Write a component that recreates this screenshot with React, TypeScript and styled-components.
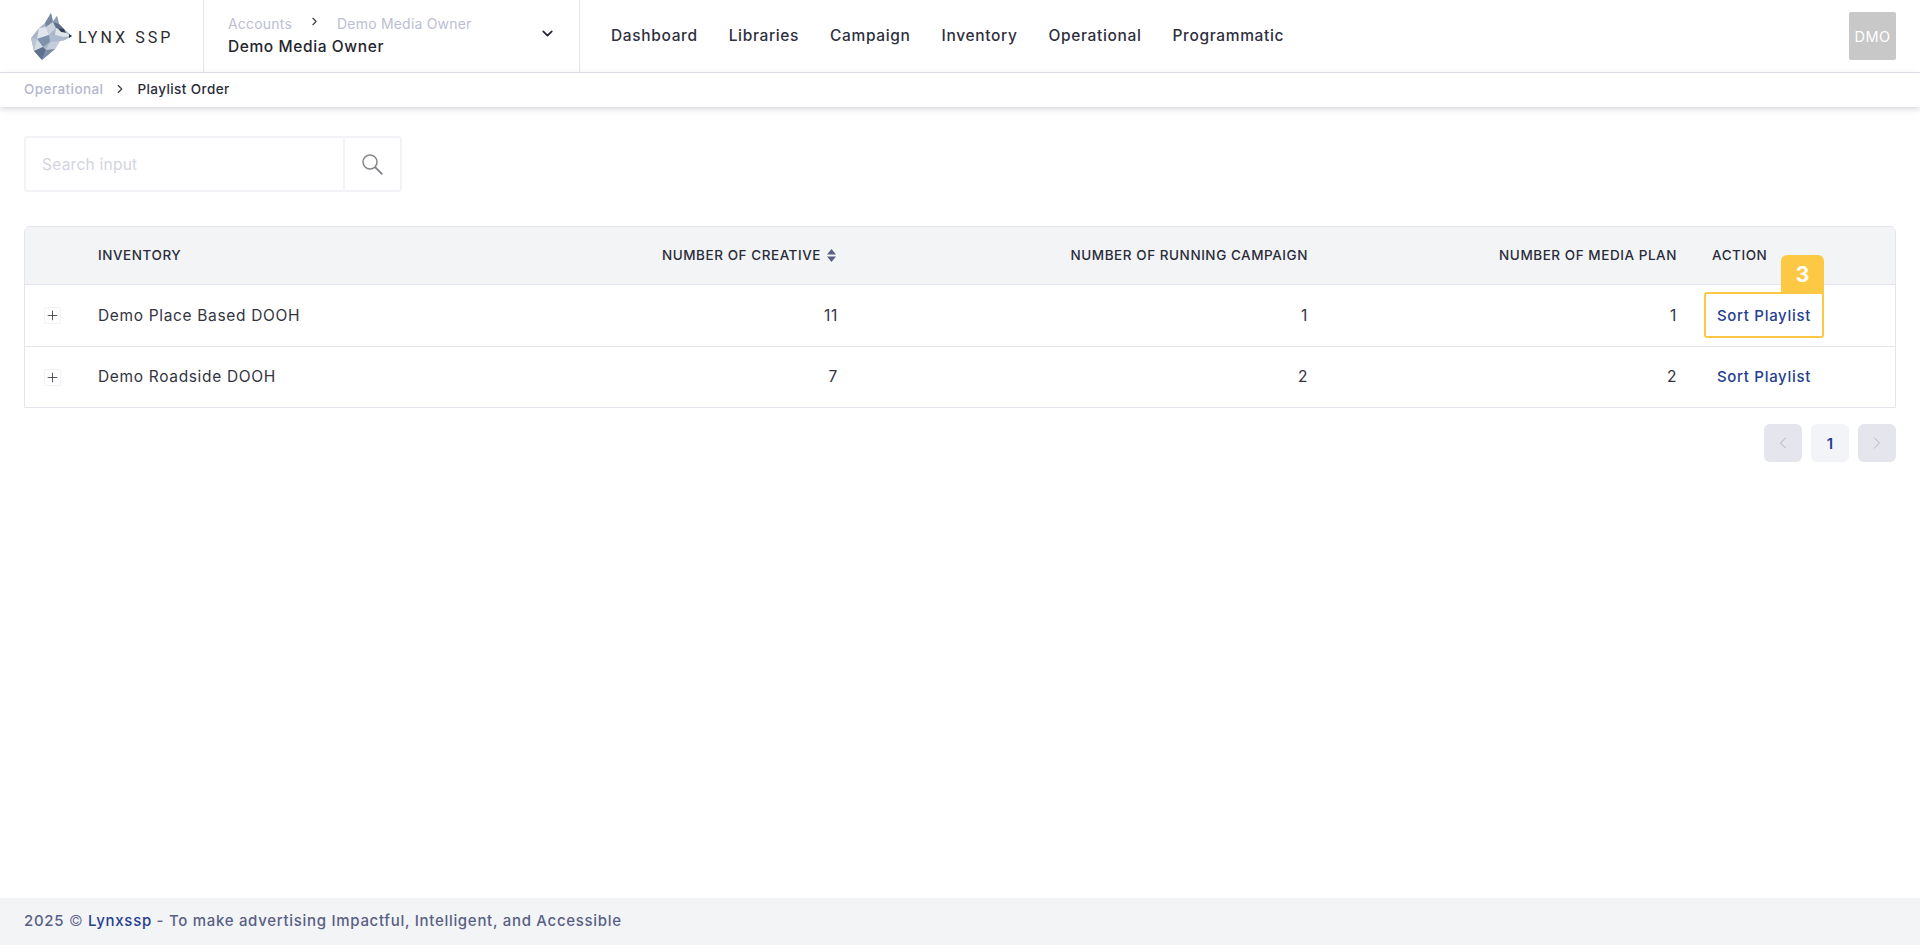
import React from "react";
import styled, { createGlobalStyle } from "styled-components";
import { ChevronDown, ChevronLeft, ChevronRight, Plus } from "lucide-react";

const GlobalStyle = createGlobalStyle`
  html, body {
    margin: 0;
    padding: 0;
    background: #fff;
    font-family: Inter, "Liberation Sans", sans-serif;
    color: #2a2c3a;
  }
  * {
    box-sizing: border-box;
  }
`;

const Page = styled.div`
  display: flex;
  flex-direction: column;
  height: 948px;
  padding-bottom: 3px;
  overflow: hidden;
`;

const TopBar = styled.header`
  display: flex;
  align-items: stretch;
  height: 73px;
  border-bottom: 1px solid #e4e5ed;
`;

const LogoCell = styled.div`
  display: flex;
  align-items: center;
  gap: 6px;
  width: 204px;
  padding: 1px 0 0 31px;
  border-right: 1px solid #e4e5ed;
`;

const LogoText = styled.span`
  font-family: Roboto, sans-serif;
  font-size: 16px;
  letter-spacing: 3.05px;
  color: #2c2c33;
  white-space: nowrap;
  margin-top: 2px;
`;

const AccountCell = styled.div`
  display: flex;
  align-items: center;
  justify-content: space-between;
  width: 376px;
  padding: 0 24px;
  border-right: 1px solid #e4e5ed;
`;

const AccountTexts = styled.div`
  display: flex;
  flex-direction: column;
  gap: 5px;
  margin-top: -2px;
`;

const AccountTrail = styled.div`
  display: flex;
  align-items: center;
  gap: 16px;
  font-size: 14px;
  letter-spacing: 0.2px;
  color: #bcbed3;
`;

const TrailArrow = styled.span`
  display: flex;
  color: #3a3c4a;
  margin-top: -3px;
`;

const AccountName = styled.div`
  font-size: 15.5px;
  font-weight: 500;
  letter-spacing: 0.6px;
  color: #24252e;
`;

const CaretButton = styled.span`
  display: flex;
  color: #24252e;
  margin: -5px -1px 0 0;
`;

const Nav = styled.nav`
  display: flex;
  align-items: center;
  gap: 31px;
  padding: 0 0 1px 31px;
  flex: 1;
`;

const NavItem = styled.a`
  font-size: 15.5px;
  font-weight: 500;
  letter-spacing: 0.65px;
  color: #2e3040;
  white-space: nowrap;
`;

const Avatar = styled.div`
  display: flex;
  align-items: center;
  justify-content: center;
  align-self: flex-start;
  width: 47px;
  height: 48px;
  margin: 12px 24px 0 0;
  border-radius: 2px;
  background: #c8c8c8;
  color: #fff;
  font-size: 14.5px;
  letter-spacing: 0.4px;
`;

const Crumbs = styled.div`
  display: flex;
  align-items: center;
  height: 34px;
  padding: 0 0 2px 24px;
  font-size: 13.5px;
  font-weight: 500;
  box-shadow: 0 2px 6px rgba(60, 64, 90, 0.22);
`;

const CrumbLink = styled.span`
  color: #b5b7cf;
  letter-spacing: 0.42px;
`;

const CrumbArrow = styled.span`
  display: flex;
  margin: 0 10px;
  color: #3a3c4a;
`;

const CrumbCurrent = styled.span`
  color: #2a2c3a;
  letter-spacing: 0.42px;
`;

const Content = styled.main`
  flex: 1;
  padding: 29px 24px 0;
`;

const SearchBox = styled.div`
  display: flex;
  width: 378px;
  height: 56px;
  border: 2px solid #f2f3f7;
  border-radius: 4px;
`;

const SearchInput = styled.input`
  flex: 1;
  min-width: 0;
  height: 100%;
  padding: 1px 16px 0;
  border: 0;
  outline: 0;
  background: transparent;
  font: 400 15.5px Inter, sans-serif;
  letter-spacing: 0.25px;

  &::placeholder {
    color: #d3d4e2;
    opacity: 1;
  }
`;

const SearchButton = styled.span`
  display: flex;
  align-items: center;
  justify-content: center;
  width: 57px;
  border-left: 2px solid #f2f3f7;
  color: #85868c;
`;

const TableWrap = styled.div`
  margin-top: 34px;
  border: 1px solid #e4e5ed;
  border-radius: 6px 6px 0 0;
  overflow: hidden;
`;

const Table = styled.table`
  width: 100%;
  border-collapse: collapse;
  table-layout: fixed;
`;

const HeadRow = styled.tr`
  height: 57px;
  background: #f2f4f6;
`;

const HeadCell = styled.th<{ $right?: boolean; $width?: number; $inset?: number }>`
  position: relative;
  width: ${(p) => (p.$width ? `${p.$width}px` : "auto")};
  padding: 0 16px 0 ${(p) => p.$inset ?? 16}px;
  border-bottom: 1px solid #e4e5ed;
  text-align: ${(p) => (p.$right ? "right" : "left")};
  font-size: 13.5px;
  font-weight: 500;
  letter-spacing: 0.55px;
  color: #2a2c3a;
  white-space: nowrap;

  & + &::before {
    content: "";
    position: absolute;
    left: 0;
    top: 18px;
    width: 1px;
    height: 22px;
    background: #e6e7ec;
  }
`;

const SortMark = styled.svg`
  margin: 0 2px 0 6px;
  vertical-align: -2px;
`;

const Row = styled.tr`
  height: 62px;
  border-bottom: 1px solid #e4e5ed;

  &:last-child {
    height: 61px;
    border-bottom: 0;
  }
`;

const Cell = styled.td<{ $right?: boolean }>`
  padding: 0 16px;
  text-align: ${(p) => (p.$right ? "right" : "left")};
  font-size: 15.5px;
  font-weight: 400;
  letter-spacing: 0.66px;
  color: #33343f;
`;

const ExpandCell = styled.td`
  padding: 0 0 0 19px;
`;

const ExpandButton = styled.span`
  display: flex;
  align-items: center;
  justify-content: center;
  width: 17px;
  height: 17px;
  margin-top: 1px;
  border: 1px solid #f2f3f7;
  border-radius: 2px;
  color: #33343f;
`;

const ActionCell = styled.td`
  padding: 0 0 0 11px;
`;

const SortLink = styled.a`
  display: inline-flex;
  align-items: center;
  justify-content: center;
  width: 120px;
  height: 46px;
  font-size: 15px;
  font-weight: 500;
  letter-spacing: 0.7px;
  color: #25408f;
`;

const Spotlight = styled.div`
  position: relative;
  width: 120px;
  height: 46px;
  border: 2px solid #fdc844;
  border-radius: 3px;

  ${SortLink} {
    margin: -2px;
  }
`;

const StepBadge = styled.span`
  position: absolute;
  right: -2px;
  bottom: 100%;
  display: flex;
  align-items: center;
  justify-content: center;
  width: 43px;
  height: 39px;
  border-radius: 6px 6px 0 0;
  background: #fdc844;
  color: #fff;
  font-size: 21px;
  font-weight: 700;
`;

const Pager = styled.div`
  display: flex;
  justify-content: flex-end;
  gap: 9px;
  margin-top: 16px;
`;

const PageButton = styled.span<{ $active?: boolean }>`
  display: flex;
  align-items: center;
  justify-content: center;
  width: 38px;
  height: 38px;
  border-radius: 6px;
  background: ${(p) => (p.$active ? "#f3f4f7" : "#e4e5ed")};
  color: ${(p) => (p.$active ? "#25408f" : "#b0b2c8")};
  font-size: 15px;
  font-weight: 600;
`;

const Footer = styled.footer`
  height: 47px;
  padding-left: 24px;
  background: #f2f4f6;
  font-size: 15px;
  font-weight: 500;
  line-height: 45px;
  letter-spacing: 0.7px;
  color: #5a5f85;
  white-space: nowrap;
`;

const FooterBrand = styled.span`
  color: #25408f;
`;

const FooterCopy = styled.span`
  font-weight: 300;
`;

const WolfLogo = () => (
  <svg width="41" height="47" viewBox="0 0 41 47">
    <polygon points="20,0 22,8 26,3 28,11 33,16 41,23 34,27 29,28 24,36 11,47 3,38 0,25 8,15 14,10" fill="#a9b6c8" />
    <polygon points="20,0 22,9 15,14 14,10" fill="#76879f" />
    <polygon points="26,3 28,11 22,9" fill="#8d9cb3" />
    <polygon points="15,14 22,9 25,15 18,22" fill="#c9d2de" />
    <polygon points="8,15 15,14 18,22 6,26" fill="#e0e5ec" />
    <polygon points="0,25 6,26 3,38" fill="#b9c4d4" />
    <polygon points="22,9 28,11 33,16 25,15" fill="#5d6e8a" />
    <polygon points="27,15 33,16 35,20 30,19" fill="#343f55" />
    <polygon points="25,15 30,19 35,20 41,23 32,24 24,22" fill="#dfe5ec" />
    <polygon points="41,23 38,25 38,21" fill="#2c3446" />
    <polygon points="18,22 24,22 32,24 34,27 29,28 19,29" fill="#aebace" />
    <polygon points="6,26 18,22 19,29 12,34" fill="#8091ab" />
    <polygon points="19,29 29,28 24,36 15,37" fill="#c3cddb" />
    <polygon points="6,26 12,34 3,38" fill="#d5dce6" />
    <polygon points="3,38 12,34 15,37 11,47" fill="#5f708c" />
    <polygon points="15,37 24,36 11,47" fill="#7c8da8" />
  </svg>
);

const SearchIcon = () => (
  <svg width="21" height="21" viewBox="0 0 21 21" fill="none" stroke="currentColor" strokeWidth="1.5">
    <circle cx="8" cy="8" r="7" />
    <line x1="13" y1="13" x2="20.3" y2="20.3" strokeWidth="1.8" />
  </svg>
);

const SortIcon = () => (
  <SortMark width="9" height="13" viewBox="0 0 9 13" fill="#5a5f85">
    <polygon points="4.5,0 9,5.5 0,5.5" />
    <polygon points="4.5,13 9,7.5 0,7.5" />
  </SortMark>
);

const rows = [
  { name: "Demo Place Based DOOH", creative: 11, running: 1, plans: 1, highlighted: true },
  { name: "Demo Roadside DOOH", creative: 7, running: 2, plans: 2, highlighted: false },
];

const navItems = ["Dashboard", "Libraries", "Campaign", "Inventory", "Operational", "Programmatic"];

export default function App() {
  return (
    <Page>
      <GlobalStyle />
      <TopBar>
        <LogoCell>
          <WolfLogo />
          <LogoText>LYNX SSP</LogoText>
        </LogoCell>
        <AccountCell>
          <AccountTexts>
            <AccountTrail>
              <span>Accounts</span>
              <TrailArrow>
                <ChevronRight size={13} />
              </TrailArrow>
              <span>Demo Media Owner</span>
            </AccountTrail>
            <AccountName>Demo Media Owner</AccountName>
          </AccountTexts>
          <CaretButton>
            <ChevronDown size={17} strokeWidth={2.4} />
          </CaretButton>
        </AccountCell>
        <Nav>
          {navItems.map((item) => (
            <NavItem key={item}>{item}</NavItem>
          ))}
        </Nav>
        <Avatar>DMO</Avatar>
      </TopBar>
      <Crumbs>
        <CrumbLink>Operational</CrumbLink>
        <CrumbArrow>
          <ChevronRight size={14} />
        </CrumbArrow>
        <CrumbCurrent>Playlist Order</CrumbCurrent>
      </Crumbs>
      <Content>
        <SearchBox>
          <SearchInput placeholder="Search input" />
          <SearchButton>
            <SearchIcon />
          </SearchButton>
        </SearchBox>
        <TableWrap>
          <Table>
            <thead>
              <HeadRow>
                <HeadCell $width={57} />
                <HeadCell $width={406}>INVENTORY</HeadCell>
                <HeadCell $right $width={366}>
                  NUMBER OF CREATIVE
                  <SortIcon />
                </HeadCell>
                <HeadCell $right $width={470}>
                  NUMBER OF RUNNING CAMPAIGN
                </HeadCell>
                <HeadCell $right $width={369}>
                  NUMBER OF MEDIA PLAN
                </HeadCell>
                <HeadCell $inset={19}>ACTION</HeadCell>
              </HeadRow>
            </thead>
            <tbody>
              {rows.map((row) => (
                <Row key={row.name}>
                  <ExpandCell>
                    <ExpandButton>
                      <Plus size={15} strokeWidth={1.3} />
                    </ExpandButton>
                  </ExpandCell>
                  <Cell>{row.name}</Cell>
                  <Cell $right>{row.creative}</Cell>
                  <Cell $right>{row.running}</Cell>
                  <Cell $right>{row.plans}</Cell>
                  <ActionCell>
                    {row.highlighted ? (
                      <Spotlight>
                        <StepBadge>3</StepBadge>
                        <SortLink>Sort Playlist</SortLink>
                      </Spotlight>
                    ) : (
                      <SortLink>Sort Playlist</SortLink>
                    )}
                  </ActionCell>
                </Row>
              ))}
            </tbody>
          </Table>
        </TableWrap>
        <Pager>
          <PageButton>
            <ChevronLeft size={20} strokeWidth={1.2} />
          </PageButton>
          <PageButton $active>1</PageButton>
          <PageButton>
            <ChevronRight size={20} strokeWidth={1.2} />
          </PageButton>
        </Pager>
      </Content>
      <Footer>
        2025 <FooterCopy>©</FooterCopy> <FooterBrand>Lynxssp</FooterBrand> - To make advertising Impactful, Intelligent, and Accessible
      </Footer>
    </Page>
  );
}
